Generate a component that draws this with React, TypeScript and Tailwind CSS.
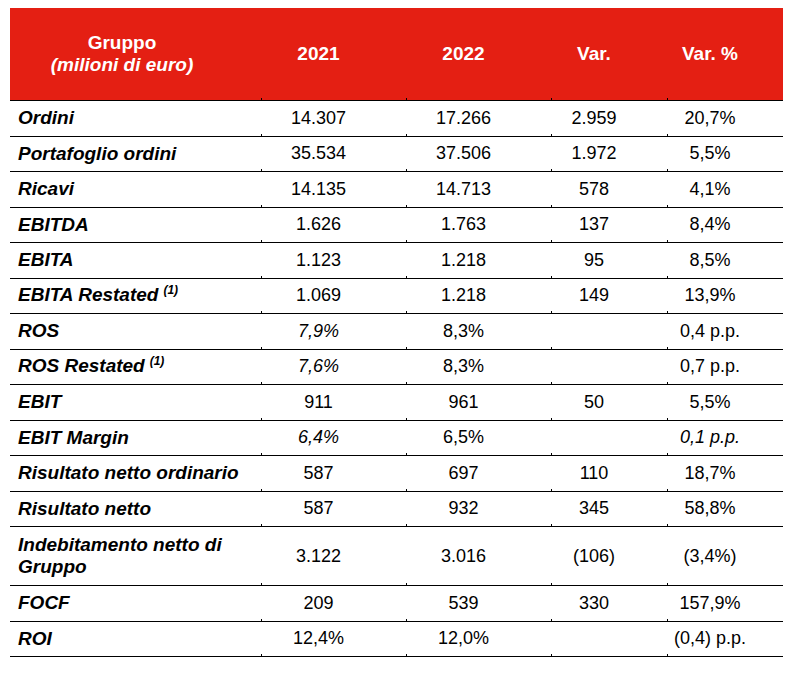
import React from "react";

type Row = {
  label: React.ReactNode;
  values: string[];
  italic?: number[];
  tall?: boolean;
};

const Sup = () => (
  <span className="ml-[5px] text-[12px] font-bold italic relative -top-[7px]">(1)</span>
);

const rows: Row[] = [
  { label: "Ordini", values: ["14.307", "17.266", "2.959", "20,7%"] },
  { label: "Portafoglio ordini", values: ["35.534", "37.506", "1.972", "5,5%"] },
  { label: "Ricavi", values: ["14.135", "14.713", "578", "4,1%"] },
  { label: "EBITDA", values: ["1.626", "1.763", "137", "8,4%"] },
  { label: "EBITA", values: ["1.123", "1.218", "95", "8,5%"] },
  {
    label: (
      <>
        EBITA Restated
        <Sup />
      </>
    ),
    values: ["1.069", "1.218", "149", "13,9%"],
  },
  { label: "ROS", values: ["7,9%", "8,3%", "", "0,4 p.p."], italic: [0] },
  {
    label: (
      <>
        ROS Restated
        <Sup />
      </>
    ),
    values: ["7,6%", "8,3%", "", "0,7 p.p."],
    italic: [0],
  },
  { label: "EBIT", values: ["911", "961", "50", "5,5%"] },
  { label: "EBIT Margin", values: ["6,4%", "6,5%", "", "0,1 p.p."], italic: [0, 3] },
  { label: "Risultato netto ordinario", values: ["587", "697", "110", "18,7%"] },
  { label: "Risultato netto", values: ["587", "932", "345", "58,8%"] },
  {
    label: (
      <>
        Indebitamento netto di
        <br />
        Gruppo
      </>
    ),
    values: ["3.122", "3.016", "(106)", "(3,4%)"],
    tall: true,
  },
  { label: "FOCF", values: ["209", "539", "330", "157,9%"] },
  { label: "ROI", values: ["12,4%", "12,0%", "", "(0,4) p.p."] },
];

const cols = "grid grid-cols-[251px_145px_145px_116px_116px]";

function Tick() {
  return <span className="absolute left-0 bottom-[-1px] h-[3px] w-px bg-black" />;
}

export default function App() {
  return (
    <div
      className="w-[803px] h-[681px] bg-white pl-[10px] pt-[8px] text-black"
      style={{ fontFamily: '"Liberation Sans", Arial, sans-serif' }}
    >
      <div className="w-[773px]">
        {/* header */}
        <div className={`${cols} h-[93px] bg-[#e41f13] text-white font-bold text-[19px] border-b border-black`}>
          <div className="flex flex-col items-center justify-center pr-[27px] leading-[22px]">
            <span>Gruppo</span>
            <span className="italic">(milioni di euro)</span>
          </div>
          {["2021", "2022", "Var.", "Var. %"].map((h) => (
            <div key={h} className="relative flex items-center justify-center pr-[30px]">
              {h}
              <Tick />
            </div>
          ))}
        </div>

        {/* body */}
        {rows.map((r, i) => (
          <div
            key={i}
            className={`${cols} ${r.tall ? "h-[59px]" : "h-[35.5px]"} border-b border-black text-[18px]`}
          >
            <div className="flex items-center pl-[8px] font-bold italic text-[19px] leading-[22px]">
              <span>{r.label}</span>
            </div>
            {r.values.map((v, j) => (
              <div
                key={j}
                className={`relative flex items-center justify-center pr-[30px] ${
                  r.italic?.includes(j) ? "italic" : ""
                }`}
              >
                {v}
                <Tick />
              </div>
            ))}
          </div>
        ))}
      </div>
    </div>
  );
}
